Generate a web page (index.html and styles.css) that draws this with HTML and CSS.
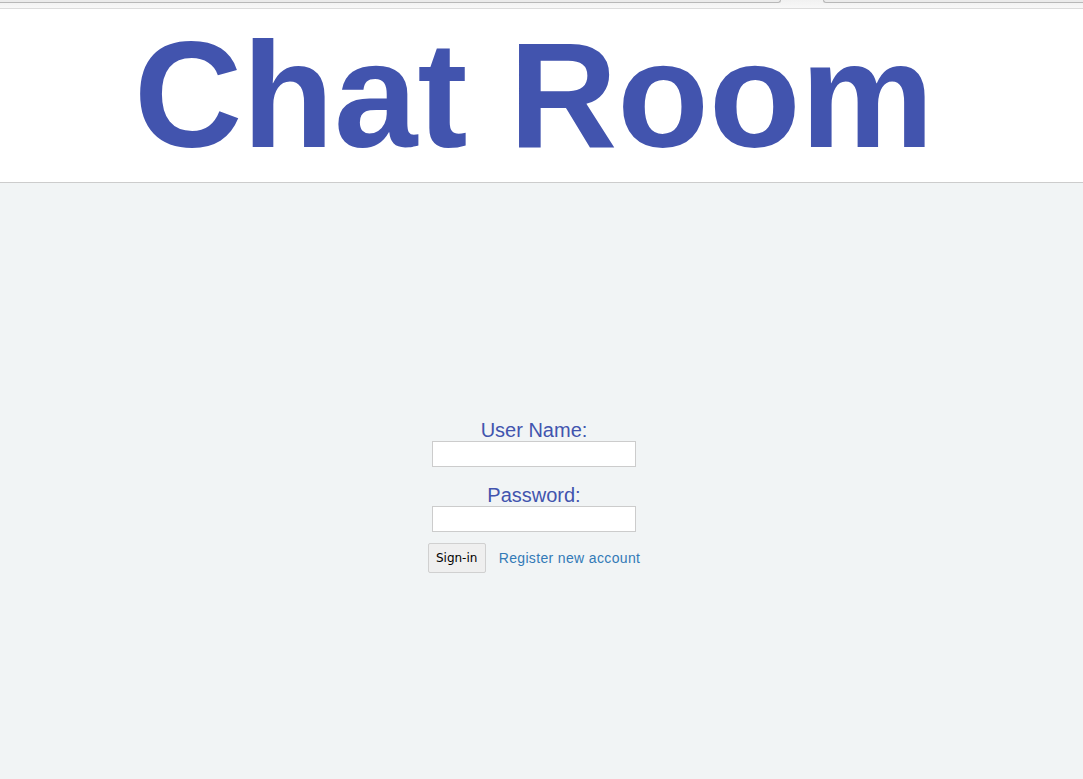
FILE: index.html
```html
<!DOCTYPE html>
<html lang="en">
<head>
<meta charset="utf-8">
<title>Chat Room</title>
<link rel="stylesheet" href="styles.css">
</head>
<body>
<div class="topbar">
  <div class="tab tab-left"></div>
  <div class="tab tab-right"></div>
</div>
<header class="header">
  <h1 class="title">Chat Room</h1>
</header>
<main class="main">
  <form class="login">
    <div class="group">
      <label class="label" for="user">User Name:</label>
      <input class="field" id="user" type="text">
    </div>
    <div class="group">
      <label class="label" for="pass">Password:</label>
      <input class="field" id="pass" type="password">
    </div>
    <div class="actions">
      <button class="btn" type="button">Sign-in</button>
      <a class="link" href="#">Register new account</a>
    </div>
  </form>
</main>
</body>
</html>
```
FILE: styles.css
```css
* { box-sizing: border-box; }
html, body { margin: 0; padding: 0; height: 100%; }
body {
  font-family: "Liberation Sans", Arial, sans-serif;
  background: #f1f4f5;
  display: flex;
  flex-direction: column;
}
.topbar {
  height: 9px;
  flex: none;
  display: flex;
  gap: 42px;
  background: linear-gradient(#f1f1f1, #f8f8f8);
  border-bottom: 1px solid #dcdcdc;
}
.tab {
  height: 3px;
  background: #ebebeb;
  border-bottom: 1px solid #b8b8b8;
}
.tab-left {
  width: 781px;
  border-right: 1px solid #b8b8b8;
  border-bottom-right-radius: 3px;
}
.tab-right {
  flex: 1;
  border-left: 1px solid #b8b8b8;
  border-bottom-left-radius: 3px;
}
.header {
  flex: none;
  background: #fff;
  border-bottom: 1px solid #cccccc;
}
.title {
  margin: 0;
  padding-right: 15px;
  text-align: center;
  font-family: "Liberation Sans", Arial, sans-serif;
  font-weight: bold;
  font-size: 150px;
  line-height: 173px;
  color: #4254ae;
}
.main {
  flex: 1;
  padding-top: 236px;
  padding-right: 15px;
  display: flex;
  justify-content: center;
}
.login {
  display: flex;
  flex-direction: column;
  align-items: center;
}
.group {
  display: flex;
  flex-direction: column;
  align-items: center;
  margin-bottom: 17px;
}
.group + .group { margin-bottom: 11px; }
.label {
  font-size: 20px;
  line-height: 22px;
  color: #4254ae;
}
.field {
  width: 204px;
  height: 26px;
  margin: 0;
  border: 1px solid #cccccc;
  background: #fff;
  padding: 2px 4px;
  font-size: 14px;
}
.actions {
  display: flex;
  align-items: center;
  gap: 13px;
}
.btn {
  width: 58px;
  height: 30px;
  margin: 0;
  padding: 0;
  font-family: "DejaVu Sans", Verdana, sans-serif;
  font-size: 12px;
  color: #000;
  background: #efefef;
  border: 1px solid #d0d0d0;
  border-radius: 2px;
}
.link {
  font-size: 14px;
  letter-spacing: 0.35px;
  color: #337ab7;
  text-decoration: none;
}
```
